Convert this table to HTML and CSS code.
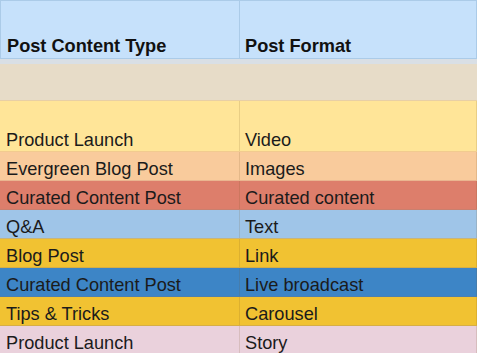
FILE: index.html
```html
<!DOCTYPE html>
<html>
<head>
<meta charset="utf-8">
<link rel="stylesheet" href="styles.css">
</head>
<body>
<div class="sheet">
  <div class="row head">
    <div class="cell">Post Content Type</div>
    <div class="cell">Post Format</div>
  </div>
  <div class="row band"></div>
  <div class="row beige"></div>
  <div class="row tall c-yellow">
    <div class="cell">Product Launch</div>
    <div class="cell">Video</div>
  </div>
  <div class="row c-orange">
    <div class="cell">Evergreen Blog Post</div>
    <div class="cell">Images</div>
  </div>
  <div class="row c-red">
    <div class="cell">Curated Content Post</div>
    <div class="cell">Curated content</div>
  </div>
  <div class="row c-lblue">
    <div class="cell">Q&amp;A</div>
    <div class="cell">Text</div>
  </div>
  <div class="row c-gold">
    <div class="cell">Blog Post</div>
    <div class="cell">Link</div>
  </div>
  <div class="row c-blue">
    <div class="cell">Curated Content Post</div>
    <div class="cell">Live broadcast</div>
  </div>
  <div class="row c-gold">
    <div class="cell">Tips &amp; Tricks</div>
    <div class="cell">Carousel</div>
  </div>
  <div class="row c-pink">
    <div class="cell">Product Launch</div>
    <div class="cell">Story</div>
  </div>
</div>
</body>
</html>
```
FILE: styles.css
```css
html, body {
  margin: 0;
  padding: 0;
  background: #ffffff;
}
body {
  width: 477px;
  height: 353px;
  overflow: hidden;
  font-family: "Liberation Sans", Arial, sans-serif;
  font-size: 18.2px;
  color: #1b1b1b;
}
.sheet {
  display: flex;
  flex-direction: column;
  width: 477px;
}
.row {
  display: grid;
  grid-template-columns: 240px 237px;
  box-sizing: border-box;
  height: 29px;
  border-bottom: 1px solid rgba(120, 90, 40, 0.18);
  flex: none;
}
.cell {
  display: flex;
  align-items: flex-end;
  box-sizing: border-box;
  padding: 0 0 1px 6px;
  line-height: 20px;
  white-space: nowrap;
  border-right: 1px solid rgba(120, 90, 40, 0.16);
}
.cell + .cell {
  padding-left: 5px;
}
.head {
  height: 59px;
  background: #c6e1fb;
  border-top: 1px solid #abcbe8;
  border-left: 1px solid #abcbe8;
  border-bottom: 1px solid #abcbe8;
  grid-template-columns: 239px 237px;
  font-weight: bold;
  color: #111111;
}
.head .cell {
  border-right: 1px solid #abcbe8;
  padding-bottom: 2px;
}
.band {
  height: 5px;
  background: #d9dfe5;
  border-bottom: none;
}
.beige {
  height: 37px;
  background: #e7dcc8;
  border-bottom: 1px solid #e8cfa5;
}
.tall {
  height: 51px;
}
.c-yellow { background: #ffe598; border-bottom-color: #f2cb8f; }
.c-orange { background: #f9cb9c; border-bottom-color: #eab58f; }
.c-red { background: #dd7e6b; border-bottom-color: #c9806f; }
.c-lblue { background: #9fc5e8; border-bottom-color: #c6b47e; }
.c-gold { background: #f1c232; border-bottom-color: #d6ae46; }
.c-blue { background: #3d85c6; border-bottom-color: #4e7fae; }
.c-pink { background: #ead1dc; }
```
